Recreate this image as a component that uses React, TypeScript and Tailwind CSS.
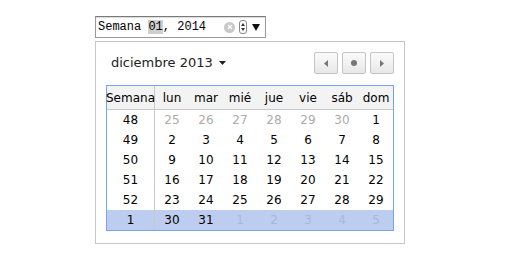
import React from 'react';

const weeks: { wk: number; days: [number, boolean][]; selected?: boolean }[] = [
  { wk: 48, days: [[25, true], [26, true], [27, true], [28, true], [29, true], [30, true], [1, false]] },
  { wk: 49, days: [[2, false], [3, false], [4, false], [5, false], [6, false], [7, false], [8, false]] },
  { wk: 50, days: [[9, false], [10, false], [11, false], [12, false], [13, false], [14, false], [15, false]] },
  { wk: 51, days: [[16, false], [17, false], [18, false], [19, false], [20, false], [21, false], [22, false]] },
  { wk: 52, days: [[23, false], [24, false], [25, false], [26, false], [27, false], [28, false], [29, false]] },
  { wk: 1, days: [[30, false], [31, false], [1, true], [2, true], [3, true], [4, true], [5, true]], selected: true },
];

const dayNames = ['lun', 'mar', 'mié', 'jue', 'vie', 'sáb', 'dom'];

function NavButton({ children }: { children: React.ReactNode }) {
  return (
    <button className="w-[24px] h-[22px] flex items-center justify-center rounded-[2px] border border-[#c4c4c4] bg-gradient-to-b from-[#fbfbfb] to-[#e8e8e8]">
      {children}
    </button>
  );
}

export default function App() {
  return (
    <div className="w-[514px] h-[262px] bg-white pl-[95px] pt-[16px] flex flex-col" style={{ fontFamily: '"DejaVu Sans", sans-serif' }}>
      {/* week input */}
      <div className="w-[171px] h-[22px] border border-[#9a9a9a] border-t-[#7a7a7a] bg-white flex items-center pl-[2px] pr-[5px] shadow-[inset_0_1px_1px_rgba(0,0,0,0.15)]">
        <span className="text-[12px] text-black whitespace-pre" style={{ fontFamily: '"Liberation Mono", monospace' }}>
          Semana <span className="bg-[#cfcfcf]">01</span>, 2014
        </span>
        <div className="flex-1" />
        <div className="w-[11px] h-[11px] rounded-full bg-[#c8c8c8] flex items-center justify-center mr-[4px]">
          <svg width="6" height="6" viewBox="0 0 6 6">
            <path d="M1 1L5 5M5 1L1 5" stroke="white" strokeWidth="1.4" />
          </svg>
        </div>
        <div className="w-[8px] h-[14px] rounded-[3px] border border-[#8a8a8a] flex flex-col items-center justify-center gap-[2px] mr-[5px]">
          <svg width="4" height="3" viewBox="0 0 4 3"><path d="M2 0L4 3H0Z" fill="#333" /></svg>
          <svg width="4" height="3" viewBox="0 0 4 3"><path d="M0 0H4L2 3Z" fill="#333" /></svg>
        </div>
        <svg width="8" height="7" viewBox="0 0 8 7"><path d="M0 0H8L4 7Z" fill="#111" /></svg>
      </div>

      {/* popup */}
      <div className="mt-[3px] w-[310px] h-[203px] border border-[#c6c6c6] bg-white p-[10px] flex flex-col">
        <div className="flex items-center h-[22px]">
          <span className="pl-[5px] text-[13px] text-[#222]">diciembre 2013</span>
          <svg className="ml-[6px]" width="7" height="4" viewBox="0 0 7 4"><path d="M0 0H7L3.5 4Z" fill="#222" /></svg>
          <div className="flex-1" />
          <div className="flex gap-[4px]">
            <NavButton>
              <svg width="4" height="7" viewBox="0 0 4 7"><path d="M4 0V7L0 3.5Z" fill="#777" /></svg>
            </NavButton>
            <NavButton>
              <div className="w-[6px] h-[6px] rounded-full bg-[#777]" />
            </NavButton>
            <NavButton>
              <svg width="4" height="7" viewBox="0 0 4 7"><path d="M0 0V7L4 3.5Z" fill="#777" /></svg>
            </NavButton>
          </div>
        </div>

        <div className="mt-[11px] border border-[#76a2ee] flex flex-col text-[12px]">
          <div className="flex h-[24px] items-center bg-[#f3f3f3] border-b border-[#c8c8c8] text-black">
            <div className="w-[48px] h-full flex items-center justify-center border-r border-[#c8c8c8]">Semana</div>
            {dayNames.map((d) => (
              <div key={d} className="flex-1 text-center">{d}</div>
            ))}
          </div>
          {weeks.map((w) => (
            <div key={w.wk} className={`flex h-[20px] items-center ${w.selected ? 'bg-[#bccdf0]' : ''}`}>
              <div className="w-[48px] h-full flex items-center justify-center border-r border-[#c8c8c8] text-black">{w.wk}</div>
              {w.days.map(([n, muted], i) => (
                <div
                  key={i}
                  className={`flex-1 text-center ${muted ? (w.selected ? 'text-[#a9b8d8]' : 'text-[#ababab]') : 'text-black'}`}
                >
                  {n}
                </div>
              ))}
            </div>
          ))}
        </div>
      </div>
    </div>
  );
}
